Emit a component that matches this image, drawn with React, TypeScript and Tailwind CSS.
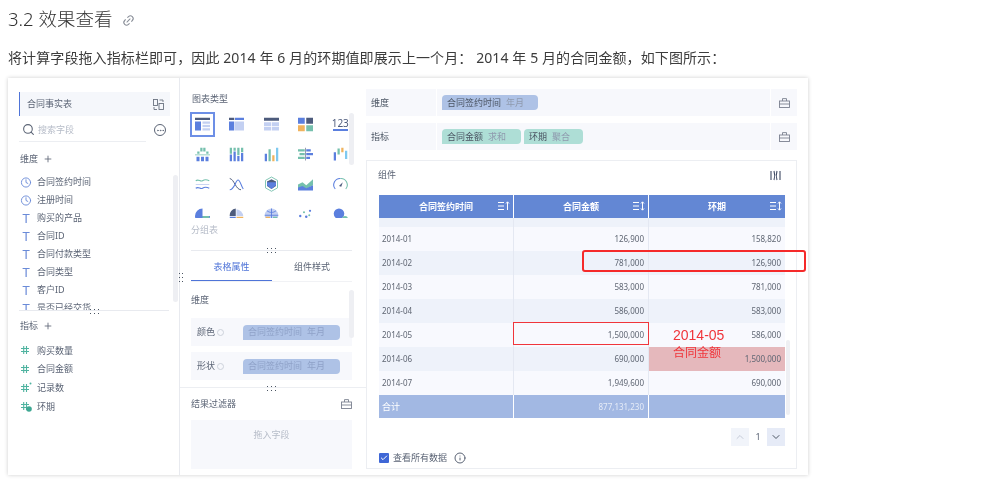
import { ChevronDown, ChevronUp, Clock, Info, Link2, Plus, Search, Check, Ellipsis } from "lucide-react";

const B = "#5b7fde";
const N = "#4d5b7c";
const L = "#c3d0f2";
const T = "#75c0ad";
const O = "#f0b35e";
const S = "#7fc9f0";

type R = [number, number, number, number, string];

const chartIcons: (R[] | "123" | "wave" | "cross" | "hex" | "area" | "gauge" | "pie" | "rose" | "map" | "dots" | "bubble")[] = [
  [[0, 2, 20, 3, N], [0, 7, 8, 12, B], [10, 7, 10, 3, L], [10, 11.5, 10, 3, L], [10, 16, 10, 3, L]],
  [[0, 2, 7, 3, N], [8, 2, 12, 3, B], [0, 7, 7, 12, B], [8, 7, 12, 12, L]],
  [[0, 2, 20, 4, N], [0, 8, 9.5, 5, L], [10.5, 8, 9.5, 5, L], [0, 14, 9.5, 5, L], [10.5, 14, 9.5, 5, L]],
  [[0, 2, 9, 8, B], [11, 2, 9, 8, N], [0, 12, 9, 8, O], [11, 12, 9, 8, T]],
  "123",
  [[7, 2, 3, 5, T], [11, 2, 3, 5, T], [3, 7, 3, 3, T], [15, 7, 3, 3, T], [0, 11, 20, 1, T], [2, 14, 4, 6, B], [8, 14, 4, 6, B], [14, 14, 4, 6, B]],
  [[1, 2, 3, 8, T], [1, 11, 3, 9, B], [6, 2, 3, 4, T], [6, 7, 3, 13, B], [11, 2, 3, 10, T], [11, 13, 3, 7, B], [16, 2, 3, 6, T], [16, 9, 3, 11, B]],
  [[1, 10, 3, 10, B], [6, 4, 3, 16, T], [11, 12, 3, 8, O], [16, 2, 3, 18, S]],
  [[0, 4, 9, 3, T], [11, 4, 6, 3, B], [2, 9, 7, 3, T], [11, 9, 9, 3, B], [0, 14, 9, 3, T], [11, 14, 5, 3, B], [9.7, 2, 0.8, 17, N]],
  [[1, 8, 3, 11, B], [6, 3, 3, 8, T], [11, 2, 3, 6, O], [16, 6, 3, 11, S]],
  "wave",
  "cross",
  "hex",
  "area",
  "gauge",
  "pie",
  "rose",
  "map",
  "dots",
  "bubble",
];

function ChartIcon({ v }: { v: (typeof chartIcons)[number] }) {
  if (v === "123") {
    return (
      <div className="w-[15px] flex flex-col items-center leading-none text-[10px] text-[#4d5b7c]">
        <span>123</span>
        <span className="w-full h-[1.5px] mt-[1px] bg-[#5b7fde]" />
      </div>
    );
  }
  return (
    <svg width="15" height="17" viewBox="0 0 20 22" fill="none">
      {Array.isArray(v) && v.map((r, i) => <rect key={i} x={r[0]} y={r[1]} width={r[2]} height={r[3]} fill={r[4]} />)}
      {v === "wave" && (
        <>
          <path d="M1 6c4-3 6 2 9 0s5-2 9 0" stroke={T} strokeWidth="1.4" />
          <path d="M1 11h18" stroke={L} strokeWidth="1.2" />
          <path d="M1 16c4-3 6 2 9 0s5-2 9 0" stroke={B} strokeWidth="1.4" />
        </>
      )}
      {v === "cross" && (
        <>
          <path d="M1 3c6 1 8 15 15 15" stroke={N} strokeWidth="1.3" />
          <path d="M1 18c6 0 8-13 11-13s4 8 7 12" stroke={B} strokeWidth="1.5" />
        </>
      )}
      {v === "hex" && (
        <>
          <path d="M10 1l8 4.5v10L10 20l-8-4.5v-10z" stroke={T} strokeWidth="1.2" />
          <path d="M4 7l6-3 6 3v6l-6 4-6-4z" fill={N} />
          <path d="M4 8h12v4l-6 5-6-5z" fill={B} />
        </>
      )}
      {v === "area" && (
        <>
          <path d="M0 11l6-3 5 4 9-8v8l-9 5-5-3-6 2z" fill={T} />
          <path d="M0 15l6-2 5 3 9-4v7H0z" fill={B} />
        </>
      )}
      {v === "gauge" && (
        <>
          <path d="M3 17A8.5 8.5 0 0 1 10 3" stroke={B} strokeWidth="1.4" />
          <path d="M10 3a8.5 8.5 0 0 1 7 14" stroke={T} strokeWidth="1.4" />
          <path d="M8 13l5-5-2 6z" fill={N} />
        </>
      )}
      {v === "pie" && (
        <>
          <path d="M10 3a10 10 0 1 0 10 10H10z" fill={B} />
          <rect x="10" y="13" width="9" height="8" fill={T} />
        </>
      )}
      {v === "rose" && (
        <>
          <path d="M9 3v10H1a9 9 0 0 1 8-10z" fill={N} />
          <path d="M10 4a10 10 0 0 1 9 9h-9z" fill={L} />
          <rect x="1" y="14" width="8" height="6" fill={B} />
          <rect x="10" y="14" width="9" height="6" fill={O} />
        </>
      )}
      {v === "map" && (
        <>
          <circle cx="10" cy="12" r="9" fill={L} />
          <path d="M1 12h18M10 3v18M4 6c4 3 8 3 12 0" stroke={B} strokeWidth="1.2" />
          <path d="M2 14h6v6a9 9 0 0 1-6-6z" fill={O} />
          <path d="M12 14h6a9 9 0 0 1-6 6z" fill={T} />
        </>
      )}
      {v === "dots" && (
        <>
          <circle cx="3" cy="13" r="1.6" fill={B} />
          <circle cx="8" cy="8" r="1.4" fill={T} />
          <circle cx="11" cy="14" r="1.7" fill={B} />
          <circle cx="16" cy="6" r="1.5" fill={B} />
          <circle cx="15" cy="12" r="1.3" fill={T} />
          <circle cx="6" cy="18" r="1.5" fill={T} />
          <circle cx="13" cy="19" r="1.4" fill={B} />
        </>
      )}
      {v === "bubble" && (
        <>
          <circle cx="8" cy="10" r="7" fill={B} />
          <circle cx="16" cy="17" r="4" fill={T} />
        </>
      )}
    </svg>
  );
}

function LockIcon() {
  return (
    <svg width="11" height="10" viewBox="0 0 11 10" fill="none" stroke="#7b8190" strokeWidth="0.9">
      <rect x="0.5" y="3" width="10" height="6.5" />
      <path d="M0.5 6h10M3.5 3V0.6h4V3" />
    </svg>
  );
}

function SortIcon({ up = false }: { up?: boolean }) {
  return (
    <svg width="12" height="10" viewBox="0 0 12 10" fill="none" stroke="white" strokeWidth="1" className="absolute right-[3px] top-[6px]">
      <path d="M0 1.5h6M0 5h6M0 8.5h6M9.5 1v8" />
      <path d="M8 2.5L9.5 .8 11 2.5" />
      {!up && <path d="M8 7.5L9.5 9.2 11 7.5" />}
    </svg>
  );
}

function MeasureIcon({ kind }: { kind?: "spark" | "badge" }) {
  return (
    <svg width="12" height="12" viewBox="0 0 12 12" fill="none" stroke="#4fb3a0" strokeWidth="1.1" className="shrink-0">
      <path d="M1 4.5h8M1 7.5h8M3.7 2v8M6.5 2v8" />
      {kind === "spark" && <circle cx="10.5" cy="1.5" r="1" fill="#4fb3a0" stroke="none" />}
      {kind === "badge" && <circle cx="9" cy="9" r="2.8" fill="#3fa893" stroke="none" />}
    </svg>
  );
}

function Dots({ vertical = false }: { vertical?: boolean }) {
  return (
    <div className={`grid gap-[3px] ${vertical ? "grid-cols-2" : "grid-cols-3"}`}>
      {Array.from({ length: 6 }).map((_, i) => (
        <span key={i} className="w-[1px] h-[1px] bg-[#4b5563]" />
      ))}
    </div>
  );
}

function TIcon() {
  return <span className="w-3 shrink-0 text-center text-[13px] leading-none text-[#6a8bd8]">T</span>;
}

function Chip({ label, sub, teal = false, muted = false, w }: { label: string; sub: string; teal?: boolean; muted?: boolean; w: string }) {
  return (
    <div
      className={`h-[15px] flex items-center gap-[5px] pl-[5px] rounded-tl-[4px] rounded-r-[4px] text-[9px] whitespace-nowrap ${
        teal ? "bg-[#aeded6]" : "bg-[#aec2e6]"
      } ${w}`}
    >
      <span className={muted ? "text-[#8fa2c8]" : "text-[#4b5563]"}>{label}</span>
      <span className={muted ? "text-[#8fa2c8]" : "text-[#8f9aae]"}>{sub}</span>
    </div>
  );
}

const dims = ["合同签约时间", "注册时间", "购买的产品", "合同ID", "合同付款类型", "合同类型", "客户ID"];
const rows = [
  ["2014-01", "126,900", "158,820"],
  ["2014-02", "781,000", "126,900"],
  ["2014-03", "583,000", "781,000"],
  ["2014-04", "586,000", "583,000"],
  ["2014-05", "1,500,000", "586,000"],
  ["2014-06", "690,000", "1,500,000"],
  ["2014-07", "1,949,600", "690,000"],
];
const cols = "grid grid-cols-[135px_135px_136px]";

export default function App() {
  return (
    <div className="w-[1004px] h-[500px] overflow-hidden bg-white pl-2 pt-[6px] text-[#333] blur-[0.3px] font-['Noto_Sans','Noto_Sans_CJK_SC',sans-serif]">
      <h1 className="h-[26px] flex items-center gap-[10px] text-[18.5px] font-light leading-none">
        3.2 效果查看
        <Link2 size={13} className="text-[#8a8f99] -rotate-45 mt-[2px]" />
      </h1>
      <p className="mt-[14px] h-[24px] text-[14px] tracking-[0.1px] leading-[24px] text-[#3c3c3c] whitespace-nowrap">
        将计算字段拖入指标栏即可，因此 2014 年 6 月的环期值即展示上一个月： 2014 年 5 月的合同金额，如下图所示：
      </p>

      <div className="relative mt-[8px] w-[800px] h-[397px] flex bg-white shadow-[0_0_4px_rgba(0,0,0,0.2)] text-[9px] text-[#5b6475]">
        {/* field list */}
        <div className="relative w-[172px] shrink-0 border-r border-[#e8eaef] pt-[14px] pl-[11px]">
          <div className="w-[151px] h-[24px] flex items-center justify-between bg-[#f5f7fb] border-l border-[#4f74d8] pl-[7px] pr-[6px]">
            <span>合同事实表</span>
            <svg width="11" height="11" viewBox="0 0 11 11" fill="none" stroke="#6b7280" strokeWidth="0.9">
              <rect x="0.5" y="0.5" width="4" height="6" />
              <rect x="6" y="4.5" width="4.5" height="6" />
              <path d="M6.5 1h3.5v2M1 8v2.5h3" />
            </svg>
          </div>
          <div className="mt-[2px] flex items-center gap-[8px]">
            <div className="w-[127px] h-[24px] flex items-center gap-[3px] pl-[3px] border-b border-[#eceef2] text-[#b6bcc8]">
              <Search size={13} className="text-[#5b6475]" />
              <span>搜索字段</span>
            </div>
            <div className="w-[12px] h-[12px] rounded-full border border-[#5b6475] flex items-center justify-center">
              <Ellipsis size={9} />
            </div>
          </div>
          <div className="mt-[8px] h-[18px] flex items-center gap-[5px] pl-[1px]">
            维度 <Plus size={10} />
          </div>
          <div className="mt-[5px] h-[138px] w-[150px] overflow-hidden border-b border-[#e8eaef] flex flex-col">
            {dims.map((d, i) => (
              <div key={d} className="h-[18px] shrink-0 flex items-center gap-[5px] pl-[1px]">
                {i < 2 ? <Clock size={11} className="text-[#6a8bd8] w-3" /> : <TIcon />}
                {d}
              </div>
            ))}
            <div className="h-[18px] shrink-0 flex items-center gap-[5px] pl-[1px]">
              <TIcon />
              是否已经交货
            </div>
          </div>
          <div className="mt-[6px] h-[18px] flex items-center gap-[5px] pl-[1px]">
            指标 <Plus size={10} />
          </div>
          <div className="mt-[6px] flex flex-col">
            {(
              [
                ["购买数量", undefined],
                ["合同金额", undefined],
                ["记录数", "spark"],
                ["环期", "badge"],
              ] as const
            ).map(([m, kind]) => (
              <div key={m} className="h-[18.7px] flex items-center gap-[5px] pl-[1px]">
                <MeasureIcon kind={kind} />
                {m}
              </div>
            ))}
          </div>
          <div className="absolute left-[165px] top-[97px] w-[5px] h-[127px] rounded bg-[#eeeff3]" />
          <div className="absolute left-[171px] top-[195px]">
            <Dots vertical />
          </div>
          <div className="absolute left-[82px] top-[231px]">
            <Dots />
          </div>
        </div>

        {/* chart settings */}
        <div className="relative w-[186px] shrink-0">
          <div className="pl-[11px] pt-[15px] w-[175px]">
            <div className="h-[12px] leading-[12px] pl-[1px]">图表类型</div>
            <div className="mt-[7px] w-[173px] h-[106px] overflow-hidden grid grid-cols-[repeat(5,34.5px)] auto-rows-[30px] -ml-[6px]">
              {chartIcons.map((v, i) => (
                <div key={i} className="h-[30px] flex items-start justify-center">
                  <div className={`w-[25px] h-[25px] flex items-center justify-center ${i === 0 ? "border-2 border-[#6d8fe6]" : ""}`}>
                    <ChartIcon v={v} />
                  </div>
                </div>
              ))}
            </div>
            <div className="mt-[6px] h-[12px] leading-[12px] text-[#b6bcc8]">分组表</div>
          </div>
          <div className="mt-[14px] ml-[11px] w-[161px] border-t border-[#e8eaef]" />
          <div className="ml-[11px] w-[161px] h-[31px] flex border-b border-[#f1f2f5]">
            <div className="w-[81px] flex items-center justify-center pt-[2px] text-[#4f74d8] border-b border-[#4f74d8]">表格属性</div>
            <div className="flex-1 flex items-center justify-center pt-[2px]">组件样式</div>
          </div>
          <div className="ml-[11px] mt-[12px] h-[12px] leading-[12px]">维度</div>
          <div className="ml-[11px] w-[161px] mt-[12px] flex flex-col gap-[6px]">
            {["颜色", "形状"].map((k) => (
              <div key={k} className="h-[28px] flex items-center justify-between bg-[#f7f8fc] pl-[6px] pr-[12px]">
                <span className="flex items-center gap-[2px]">
                  {k}
                  <span className="w-[7px] h-[7px] rounded-full border border-[#cdd2db]" />
                </span>
                <Chip label="合同签约时间" sub="年月" muted w="w-[97px]" />
              </div>
            ))}
          </div>
          <div className="mt-[7px] border-t border-[#eceef2]" />
          <div className="ml-[11px] w-[161px] mt-[10px] h-[12px] flex items-center justify-between">
            结果过滤器
            <LockIcon />
          </div>
          <div className="ml-[11px] w-[161px] mt-[10px] h-[49px] bg-[#f7f8fc] text-[#b6bcc8] text-center pt-[8px]">拖入字段</div>

          <div className="absolute left-[169px] top-[35px] w-[5px] h-[52px] rounded bg-[#eeeff3]" />
          <div className="absolute left-[169px] top-[212px] w-[5px] h-[48px] rounded bg-[#eeeff3]" />
          <div className="absolute left-[87px] top-[170px]">
            <Dots />
          </div>
          <div className="absolute left-[87px] top-[308px]">
            <Dots />
          </div>
        </div>

        {/* pills and table */}
        <div className="w-[431px] shrink-0 pt-[11px]">
          <div>
            {[
              { title: "维度", chips: [<Chip key="a" label="合同签约时间" sub="年月" w="w-[96px]" />] },
              {
                title: "指标",
                chips: [
                  <Chip key="b" teal label="合同金额" sub="求和" w="w-[79px]" />,
                  <Chip key="c" teal label="环期" sub="聚合" w="w-[59px]" />,
                ],
              },
            ].map((row, i) => (
              <div key={row.title} className={`h-[27px] flex gap-px ${i ? "mt-[7px]" : ""}`}>
                <div className="w-[70px] bg-[#f7f8fc] flex items-center pl-[5px] pt-[1px] text-[#4b5563]">{row.title}</div>
                <div className="flex-1 bg-[#f7f8fc] flex items-center gap-[3px] pl-[5px]">{row.chips}</div>
                <div className="w-[26px] bg-[#f7f8fc] flex items-center justify-center">
                  <LockIcon />
                </div>
              </div>
            ))}
          </div>

          <div className="relative mt-[10px] h-[309px] border border-[#eceef2] pl-[12px]">
            <div className="h-[34px] flex items-center justify-between pb-[6px] pr-[15px]">
              <span className="-ml-[1px]">组件</span>
              <svg width="11" height="11" viewBox="0 0 11 11" stroke="#3f4a63" fill="none" strokeWidth="1.1">
                <path d="M1 1v9M4 1c1 3 1 6 0 9M7 1c-1 3-1 6 0 9M10 1v9" />
              </svg>
            </div>
            <div className="w-[406px]">
              <div className={`${cols} h-[23px] bg-[#6387d4] text-white font-bold text-[9px]`}>
                {["合同签约时间", "合同金额", "环期"].map((h, i) => (
                  <div key={h} className={`relative flex items-center justify-center ${i < 2 ? "border-r border-white" : ""}`}>
                    {h}
                    <SortIcon up={i === 0} />
                  </div>
                ))}
              </div>
              <div className={`${cols} h-[9px] bg-[#eef2fa]`}>
                <div className="border-r border-[#e4e8f2]" />
                <div className="border-r border-[#e4e8f2]" />
                <div />
              </div>
              {rows.map((r, i) => (
                <div key={r[0]} className={`${cols} h-[24px] items-stretch text-[8px] text-[#5f6673] ${i % 2 ? "bg-[#eef2fa]" : "bg-[#f8f9fe]"}`}>
                  <div className="flex items-center pl-[3px] border-r border-[#e4e8f2]">{r[0]}</div>
                  <div className="flex items-center justify-end pr-[4px] border-r border-[#e4e8f2]">{r[1]}</div>
                  <div className={`flex items-center justify-end pr-[4px] ${r[0] === "2014-06" ? "bg-[#e5b8bc]" : ""}`}>{r[2]}</div>
                </div>
              ))}
              <div className={`${cols} h-[23px] bg-[#a2b8e3] text-white`}>
                <div className="flex items-center pl-[3px] border-r border-white">合计</div>
                <div className="flex items-center justify-end pr-[4px] border-r border-white text-[8px] text-[#e5ebf7]">877,131,230</div>
                <div />
              </div>
            </div>
            <div className="w-[406px] mt-[10px] flex justify-end items-center gap-[4px] text-[#5b6475]">
              <div className="w-[18px] h-[18px] bg-[#f1f4fa] flex items-center justify-center">
                <ChevronUp size={12} className="text-[#c5cbd8]" />
              </div>
              <span className="w-[10px] text-center">1</span>
              <div className="w-[18px] h-[18px] bg-[#e6ebf7] flex items-center justify-center">
                <ChevronDown size={12} className="text-[#4b5563]" />
              </div>
            </div>
            <div className="mt-[5px] flex items-center gap-[4px]">
              <div className="w-[10px] h-[10px] rounded-[1px] bg-[#3f67d6] flex items-center justify-center">
                <Check size={8} strokeWidth={3} className="text-white" />
              </div>
              <span className="text-[#5b6475]">查看所有数据</span>
              <Info size={12} className="ml-[3px]" />
            </div>
            <div className="absolute right-[6px] top-[179px] w-[4px] h-[75px] rounded bg-[#eeeff3]" />
          </div>
        </div>

        {/* hand-drawn annotations over the screenshot */}
        <div className="absolute left-[574px] top-[172px] w-[224px] h-[22px] rounded-[3px] border-[2.5px] border-[#f52a2a]" />
        <div className="absolute left-[505px] top-[244px] w-[136px] h-[23px] border border-[#f0353b]" />
        <div className="absolute left-[665px] top-[248px] text-[14px] leading-[18px] text-[#f0353b] font-['Liberation_Sans','Noto_Sans_CJK_SC',sans-serif]">
          <div>2014-05</div>
          <div className="text-[12px]">合同金额</div>
        </div>
      </div>
    </div>
  );
}
